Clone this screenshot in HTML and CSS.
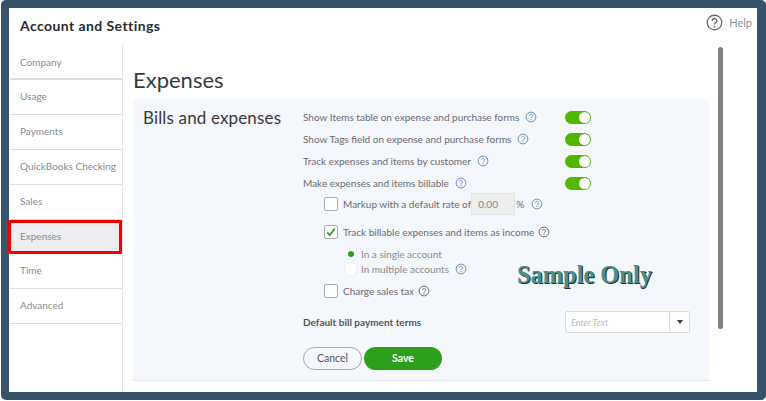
FILE: index.html
```html
<!DOCTYPE html>
<html lang="en">
<head>
<meta charset="utf-8">
<title>Account and Settings</title>
<link rel="stylesheet" href="styles.css">
</head>
<body>
<div class="frame">
  <div class="window">
    <header class="top">
      <h1 class="title">Account and Settings</h1>
      <div class="help">
        <svg class="help-icon" viewBox="0 0 18 18"><circle cx="9" cy="9" r="7.7" fill="none" stroke="#6b6c72" stroke-width="1.4"/><path d="M6.6 7.2a2.4 2.4 0 1 1 3.7 2c-.9.6-1.3 1-1.3 2" fill="none" stroke="#6b6c72" stroke-width="1.5"/><circle cx="9" cy="13.4" r=".95" fill="#6b6c72"/></svg>
        <span>Help</span>
      </div>
    </header>
    <div class="body">
      <nav class="side">
        <a class="side-item first">Company</a>
        <a class="side-item">Usage</a>
        <a class="side-item">Payments</a>
        <a class="side-item">QuickBooks Checking</a>
        <a class="side-item">Sales</a>
        <a class="side-item active">Expenses</a>
        <a class="side-item">Time</a>
        <a class="side-item">Advanced</a>
      </nav>
      <main class="main">
        <h2 class="page-title">Expenses</h2>
        <section class="panel">
          <h3 class="panel-title">Bills and expenses</h3>
          <div class="form">
            <div class="row"><span>Show Items table on expense and purchase forms</span><svg class="q"><use href="#q"/></svg><i class="toggle"></i></div>
            <div class="row"><span>Show Tags field on expense and purchase forms</span><svg class="q"><use href="#q"/></svg><i class="toggle"></i></div>
            <div class="row"><span>Track expenses and items by customer</span><svg class="q"><use href="#q"/></svg><i class="toggle"></i></div>
            <div class="row"><span>Make expenses and items billable</span><svg class="q"><use href="#q"/></svg><i class="toggle"></i></div>
            <div class="sub markup"><i class="check"></i><span>Markup with a default rate of</span><span class="rate">0.00</span><span class="pct">%</span><svg class="q"><use href="#q"/></svg></div>
            <div class="sub income"><i class="check"><svg viewBox="0 0 14 14"><path d="M2.6 7.4 5.6 10.6 11.4 2.8" fill="none" stroke="#2ca01c" stroke-width="2"/></svg></i><span>Track billable expenses and items as income</span><svg class="q grey"><use href="#q"/></svg></div>
            <div class="radio-row single"><i class="radio on"></i><span>In a single account</span></div>
            <div class="radio-row multi"><i class="radio"></i><span>In multiple accounts</span><svg class="q"><use href="#q"/></svg><strong class="sample">Sample Only</strong></div>
            <div class="sub tax"><i class="check"></i><span>Charge sales tax</span><svg class="q grey"><use href="#q"/></svg></div>
            <div class="terms"><span class="terms-label">Default bill payment terms</span><div class="select"><span class="select-text">Enter Text</span><span class="select-btn"><i class="caret"></i></span></div></div>
            <div class="actions"><button class="btn cancel">Cancel</button><button class="btn save">Save</button></div>
          </div>
        </section>
      </main>
      <div class="scrollbar"></div>
    </div>
  </div>
</div>
<svg class="defs" width="0" height="0"><symbol id="q" viewBox="0 0 12 12"><circle cx="6" cy="6" r="4.9" fill="none" stroke="currentColor" stroke-width="1"/><path d="M4.5 4.8a1.5 1.5 0 1 1 2.4 1.2c-.6.4-.9.6-.9 1.3" fill="none" stroke="currentColor" stroke-width=".9"/><circle cx="6" cy="8.6" r=".6" fill="currentColor"/></symbol></svg>
</body>
</html>
```
FILE: styles.css
```css
* { box-sizing: border-box; }
html, body { margin: 0; height: 100%; background: #fff; overflow: hidden; }
body { font-family: "Lato", "Liberation Sans", sans-serif; color: #393a3d; }
.defs { position: absolute; }
.frame { width: 765px; height: 400px; margin-left: 1px; background: #37536b; border-radius: 5px; padding: 8px 9px 8px 8px; }
.window { width: 100%; height: 100%; background: #fff; display: flex; flex-direction: column; }
.top { height: 37px; display: flex; justify-content: space-between; padding: 0 5px 0 11px; flex: none; }
.title { margin: 9px 0 0; font-size: 14px; line-height: 17px; font-weight: 700; color: #2b2c30; letter-spacing: .42px; }
.help { display: flex; align-items: center; height: 28px; gap: 6px; font-size: 11px; font-weight: 400; color: #8d9096; padding-top: 1px; }
.help-icon { width: 17px; height: 17px; }
.body { flex: 1; display: flex; min-height: 0; }
.side { width: 114px; flex: none; border-right: 1px solid #e3e4e6; padding-left: 1px; }
.side-item { display: flex; align-items: center; height: 34.8px; padding-left: 10px; font-size: 10px; color: #8a8c91; border-bottom: 1px solid #dcdde0; white-space: nowrap; padding-bottom: 2px; }
.side-item.first { border-bottom-width: 2px; height: 35.4px; padding-bottom: 0; }
.side-item.active { position: relative; background: #ecedf0; outline: 3px solid #f40000; outline-offset: -3px; margin-left: -2px; padding-left: 12px; border-bottom: none; border-radius: 1px; }
.main { width: 586px; flex: none; padding-left: 10px; }
.page-title { margin: 20px 0 0; font-size: 22px; line-height: 30px; font-weight: 400; color: #393a3d; height: 34px; }
.panel { width: 576px; height: 282px; background: #f4f7fc; border-bottom: 1px solid #e3e5e8; display: flex; }
.panel-title { margin: 7px 0 0 10px; width: 160px; flex: none; font-size: 17px; line-height: 23px; font-weight: 400; color: #393a3d; letter-spacing: .15px; }
.form { flex: 1; font-size: 10px; color: #6b6c72; padding-top: 7px; }
.row { display: flex; align-items: center; height: 22px; position: relative; }
.q { width: 12px; height: 12px; margin-left: 6px; color: #6d93b8; flex: none; }
.q.grey { color: #6b6c72; margin-left: 4px; }
.toggle { position: absolute; left: 262px; top: 4.5px; width: 26px; height: 13px; border-radius: 7px; background: #53b700; }
.toggle::after { content: ""; position: absolute; right: 1px; top: 1px; width: 11px; height: 11px; border-radius: 50%; background: #fff; }
.sub { display: flex; align-items: center; padding-left: 21px; }
.check { width: 14px; height: 14px; border: 1px solid #a9abb0; border-radius: 2px; background: #fff; margin-right: 5px; flex: none; display: block; }
.check svg { display: block; width: 12px; height: 12px; }
.markup { height: 22px; margin-top: -1px; }
.rate { width: 44px; height: 22px; margin-left: 0; background: #eeeeef; border: 1px solid #e2e3e5; display: flex; align-items: center; padding-left: 6px; color: #85878c; }
.pct { margin-left: 1px; }
.markup .q { margin-left: 7px; }
.income { height: 20px; margin-top: 7px; }
.radio-row { display: flex; align-items: center; height: 15px; padding-left: 42px; position: relative; color: #8a8c91; }
.single { margin-top: 4.5px; }
.radio { width: 12px; height: 12px; border-radius: 50%; background: #fff; margin-right: 4px; flex: none; position: relative; box-shadow: 0 0 0 1px #eceef2; }
.radio.on::after { content: ""; position: absolute; left: 3px; top: 3px; width: 6px; height: 6px; border-radius: 50%; background: #2ca01c; }
.sample { position: absolute; left: 214px; top: 0; font-family: "Liberation Serif", serif; font-size: 24.4px; line-height: 26px; font-weight: 700; color: #4f8f82; text-shadow: 1px 1px 0 #16343f; white-space: nowrap; }
.tax { height: 16px; margin-top: 6.5px; }
.terms { display: flex; align-items: center; justify-content: space-between; height: 22px; margin-top: 12px; padding-right: 19px; }
.terms-label { font-weight: 700; font-size: 10px; color: #55565b; }
.select { width: 125px; height: 22px; display: flex; background: #fff; border: 1px solid #d8dadd; border-radius: 2px; }
.select-text { flex: 1; font-style: italic; font-size: 9px; color: #babbbf; display: flex; align-items: center; padding-left: 5px; }
.select-btn { width: 20px; border-left: 1px solid #d8dadd; display: flex; align-items: center; justify-content: center; }
.caret { width: 0; height: 0; border: 3.5px solid transparent; border-top: 4px solid #393a3d; border-bottom: 0; }
.actions { display: flex; gap: 2px; margin-top: 13.5px; }
.btn { height: 23px; border-radius: 12px; font-family: inherit; font-size: 10.5px; padding: 0; }
.cancel { width: 59px; background: transparent; border: 1px solid #a5a7ab; color: #55565b; }
.save { width: 78px; background: #2ca01c; border: none; color: #fff; font-weight: 700; }
.scrollbar { width: 4.5px; height: 282px; margin: 2px 0 0 9px; background: #7f8083; border-radius: 3px; flex: none; }
```
